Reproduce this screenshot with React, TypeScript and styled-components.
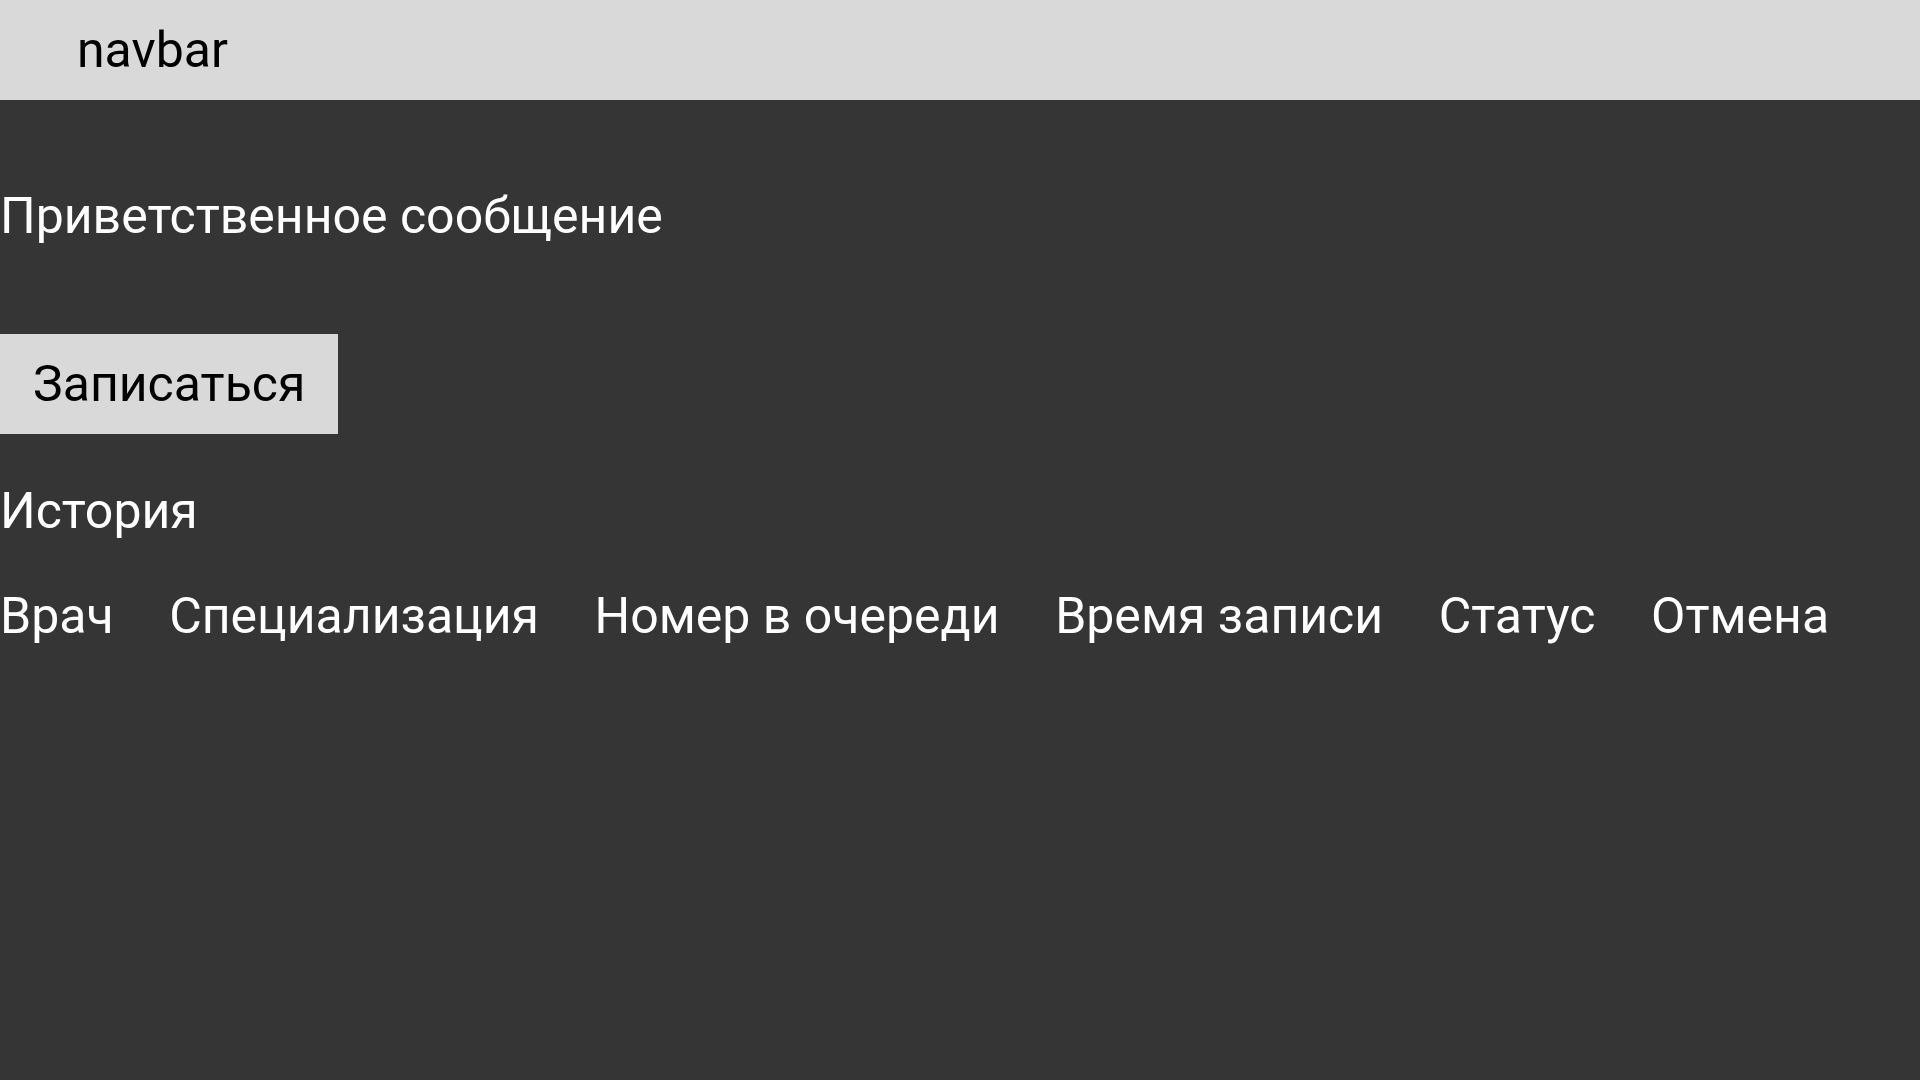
import React from "react";
import styled, { createGlobalStyle } from "styled-components";

const Global = createGlobalStyle`
  html, body { margin: 0; padding: 0; background: #353535; }
  body { font-family: Roboto, "Noto Sans", sans-serif; color: #ffffff; }
  * { box-sizing: border-box; }
`;

const Navbar = styled.header`
  height: 100px;
  background: #d9d9d9;
  display: flex;
  align-items: center;
  padding-left: 77px;
  font-size: 50px;
  color: #000;
`;

const Main = styled.main`
  display: flex;
  flex-direction: column;
  align-items: flex-start;
  padding-top: 86px;
`;

const Greeting = styled.h1`
  margin: 0;
  font-size: 50px;
  font-weight: 400;
  line-height: 60px;
`;

const Button = styled.button`
  margin-top: 88px;
  height: 100px;
  padding: 0 33px;
  border: none;
  background: #d9d9d9;
  color: #000;
  font-family: inherit;
  font-size: 50px;
`;

const SectionTitle = styled.h2`
  margin: 47px 0 0;
  font-size: 50px;
  font-weight: 400;
  line-height: 60px;
`;

const HeaderRow = styled.div`
  display: flex;
  gap: 55.5px;
  margin-top: 45px;
  font-size: 50px;
  line-height: 60px;
`;

const Col = styled.span``;

const columns = ["Врач", "Специализация", "Номер в очереди", "Время записи", "Статус", "Отмена"];

export default function App() {
  return (
    <>
      <Global />
      <Navbar>navbar</Navbar>
      <Main>
        <Greeting>Приветственное сообщение</Greeting>
        <Button>Записаться</Button>
        <SectionTitle>История</SectionTitle>
        <HeaderRow>
          {columns.map((c) => (
            <Col key={c}>{c}</Col>
          ))}
        </HeaderRow>
      </Main>
    </>
  );
}
